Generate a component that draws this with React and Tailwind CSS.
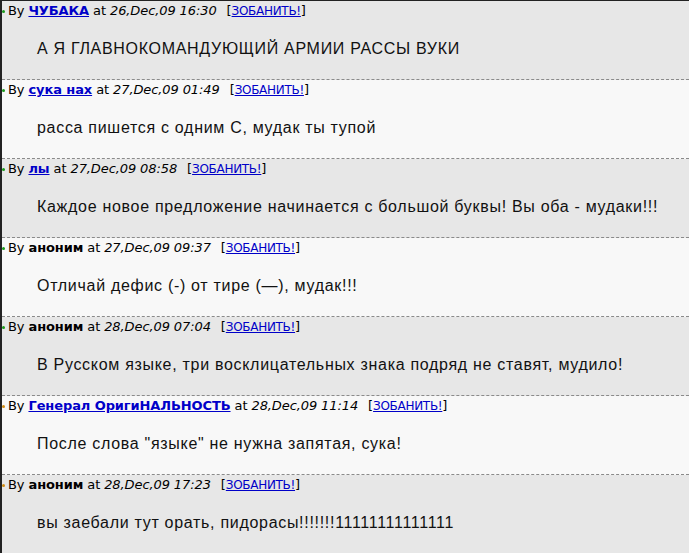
import React from 'react';

const posts = [
  { name: 'ЧУБАКА', link: true, date: '26,Dec,09 16:30', text: 'А Я ГЛАВНОКОМАНДУЮЩИЙ АРМИИ РАССЫ ВУКИ', dot: 'green' },
  { name: 'сука нах', link: true, date: '27,Dec,09 01:49', text: 'расса пишется с одним С, мудак ты тупой', dot: 'green' },
  { name: 'лы', link: true, date: '27,Dec,09 08:58', text: 'Каждое новое предложение начинается с большой буквы! Вы оба - мудаки!!!', dot: 'green' },
  { name: 'аноним', link: false, date: '27,Dec,09 09:37', text: 'Отличай дефис (-) от тире (—), мудак!!!', dot: 'green' },
  { name: 'аноним', link: false, date: '28,Dec,09 07:04', text: 'В Русском языке, три восклицательных знака подряд не ставят, мудило!', dot: 'green' },
  { name: 'Генерал ОригиНАЛЬНОСТЬ', link: true, date: '28,Dec,09 11:14', text: 'После слова "языке" не нужна запятая, сука!', dot: 'orange' },
  { name: 'аноним', link: false, date: '28,Dec,09 17:23', text: 'вы заебали тут орать, пидорасы!!!!!!!11111111111111', dot: 'orange' },
];

const Post = ({ post, index }) => {
  const bg = index % 2 === 0 ? 'bg-[#e7e7e7]' : 'bg-[#f8f8f8]';
  return (
    <div className={`${bg} h-[79px] border-b border-dashed border-[#8a8a8a] flex flex-col`}>
      <div className="flex items-center h-[20px] text-[13px] text-black [font-family:'DejaVu_Sans',Verdana,sans-serif] tracking-[-0.1px]">
        <span className={`w-[3px] h-[3px] rounded-full mr-[3px] ${post.dot === 'green' ? 'bg-[#1a9a1a]' : 'bg-[#d08a10]'}`} />
        <span>By&nbsp;</span>
        {post.link ? (
          <a href="#" className="font-bold text-[#0000c8] underline">{post.name}</a>
        ) : (
          <b>{post.name}</b>
        )}
        <span>&nbsp;at&nbsp;</span>
        <i>{post.date}</i>
        <span className="ml-[10px]">[<a href="#" className="text-[#0000c8] underline text-[12px] tracking-[-0.3px]">ЗОБАНИТЬ!</a>]</span>
      </div>
      <div className="pl-[35px] pt-[16px] text-[16px] tracking-[0.7px] text-[#111] [font-family:'Liberation_Sans',Arial,sans-serif]">
        {post.text}
      </div>
    </div>
  );
};

export default function App() {
  return (
    <div className="w-[689px] h-[553px] overflow-hidden bg-white border-l-2 border-t border-[#222]">
      {posts.map((p, i) => (
        <Post key={i} post={p} index={i} />
      ))}
    </div>
  );
}
